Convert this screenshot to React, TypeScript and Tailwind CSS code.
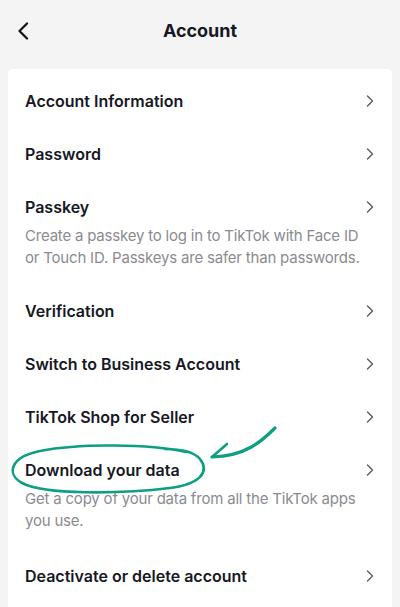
import React from 'react';

const font = { fontFamily: 'Inter, "Noto Sans", "Liberation Sans", sans-serif' };

type Item = { title: string; desc?: string; last?: string };

const items: Item[] = [
  { title: 'Account Information' },
  { title: 'Password' },
  {
    title: 'Passkey',
    desc: 'Create a passkey to log in to TikTok with Face ID or Touch ID. Passkeys are safer than passwords.',
    last: 'pb-[16px]',
  },
  { title: 'Verification' },
  { title: 'Switch to Business Account' },
  { title: 'TikTok Shop for Seller' },
  { title: 'Download your data', desc: 'Get a copy of your data from all the TikTok apps you use.', last: 'pb-[18px]' },
  { title: 'Deactivate or delete account' },
];

const Chevron = () => (
  <svg width="8" height="12" viewBox="0 0 8 12" fill="none" className="shrink-0">
    <path d="M1.5 1L6.5 6L1.5 11" stroke="#5c5c5c" strokeWidth="1.4" strokeLinecap="round" strokeLinejoin="round" />
  </svg>
);

const Row = ({ item }: { item: Item }) => (
  <div className={`px-[17px] pt-[15px] ${item.last ?? 'pb-[16px]'}`}>
    <div className="flex items-center justify-between">
      <span className="text-[16px] leading-[22px] font-semibold text-[#161823]">{item.title}</span>
      <span className="mr-[1px]">
        <Chevron />
      </span>
    </div>
    {item.desc && (
      <p className="mt-[7px] text-[15px] leading-[22px] tracking-[-0.2px] text-[#8a8b91]">{item.desc}</p>
    )}
  </div>
);

export default function App() {
  return (
    <div className="relative w-[400px] h-[607px] overflow-hidden bg-[#f4f4f4]" style={font}>
      <header className="relative flex items-center justify-center h-[60px]">
        <button className="absolute left-[15px] top-[20px] p-[2px]">
          <svg width="12" height="18" viewBox="0 0 12 18" fill="none">
            <path d="M10 1.5L2.5 9L10 16.5" stroke="#111" strokeWidth="2.2" strokeLinecap="round" strokeLinejoin="round" />
          </svg>
        </button>
        <h1 className="text-[18px] font-bold text-[#161823]">Account</h1>
      </header>

      <div className="mx-[8px] mt-[9px] bg-white rounded-[5px] pt-[6px] pb-[40px]">
        {items.map((it) => (
          <Row key={it.title} item={it} />
        ))}
      </div>

      {/* hand-drawn highlight */}
      <svg className="absolute inset-0 pointer-events-none" width="400" height="607" viewBox="0 0 400 607" fill="none">
        <path
          d="M186 452 C150 444 80 443 40 451 C10 457 6 474 22 483 C45 495 120 494 170 488 C200 484 210 472 200 459 C194 452 180 449 165 449"
          stroke="#0e9f82"
          strokeWidth="2.6"
          strokeLinecap="round"
        />
        <path d="M275 428 C262 441 246 456 212 457" stroke="#0e9f82" strokeWidth="3.2" strokeLinecap="round" />
        <path d="M212 457 L227 444" stroke="#0e9f82" strokeWidth="2.6" strokeLinecap="round" />
      </svg>
    </div>
  );
}
